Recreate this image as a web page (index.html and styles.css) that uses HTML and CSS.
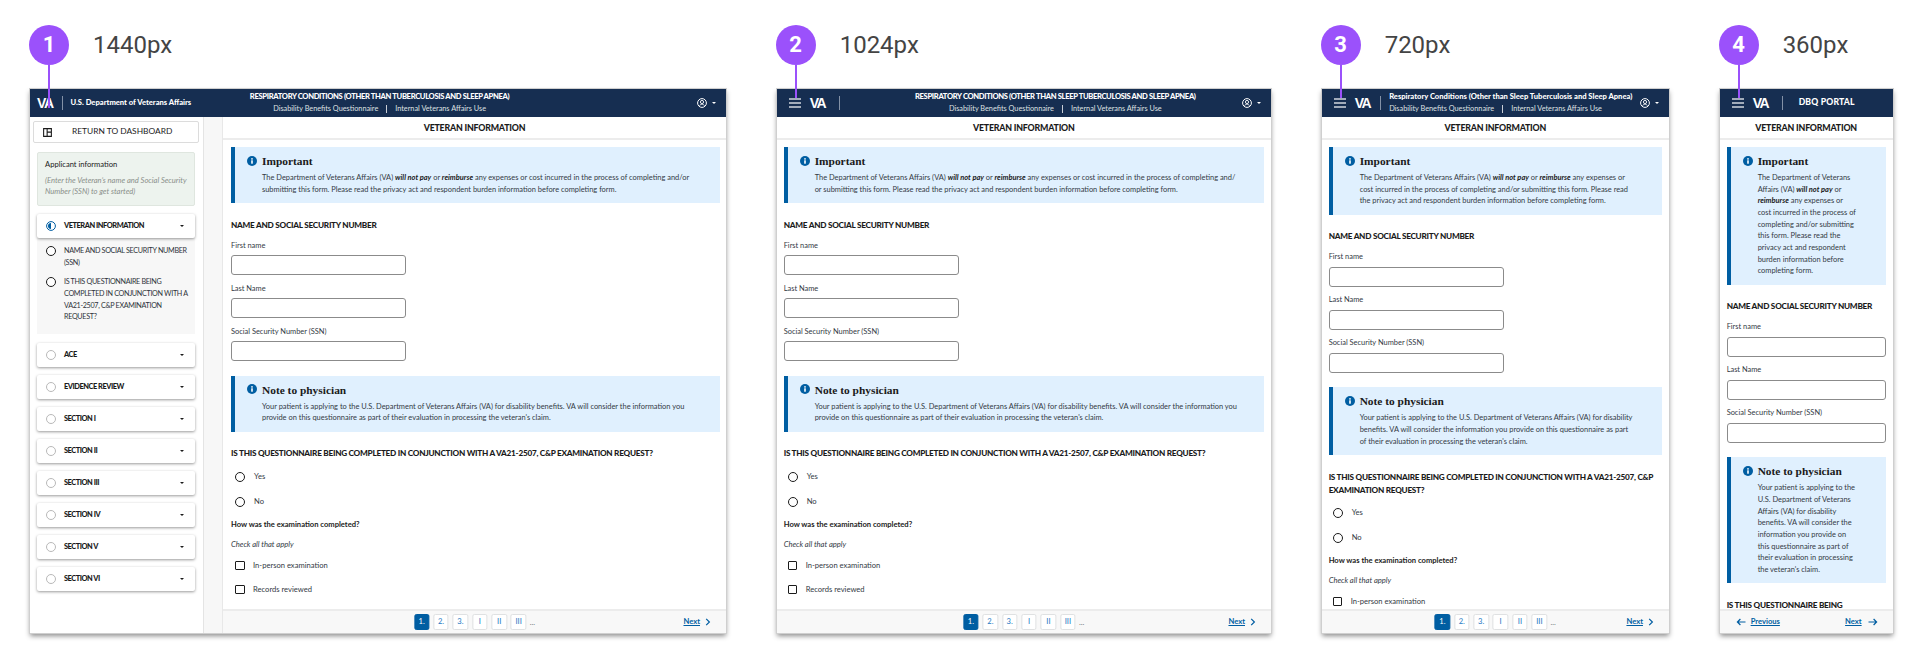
FILE: index.html
```html
<!DOCTYPE html>
<html lang="en">
<head>
    <meta charset="UTF-8">
    <title>DBQ portal breakpoints</title>
    <link rel="stylesheet" href="styles.css">
</head>
<body>
<svg class="sprite" xmlns="http://www.w3.org/2000/svg">
    <symbol id="i-info" viewBox="0 0 10 10"><circle cx="5" cy="5" r="5" fill="#005ea2"/><rect x="4.2" y="4.3" width="1.6" height="3.4" fill="#fff"/><rect x="4.2" y="2.2" width="1.6" height="1.4" fill="#fff"/></symbol>
    <symbol id="i-menu" viewBox="0 0 12 10"><rect y="0.4" width="12" height="1.2" fill="#fff"/><rect y="4.4" width="12" height="1.2" fill="#fff"/><rect y="8.4" width="12" height="1.2" fill="#fff"/></symbol>
    <symbol id="i-user" viewBox="0 0 10 10"><circle cx="5" cy="5" r="4.4" fill="none" stroke="#fff" stroke-width="1"/><circle cx="5" cy="4" r="1.6" fill="none" stroke="#fff" stroke-width=".9"/><path d="M2.6 7.6c.6-1 1.4-1.3 2.4-1.3s1.8.3 2.4 1.3" fill="none" stroke="#fff" stroke-width=".9"/></symbol>
    <symbol id="i-layout" viewBox="0 0 10 10"><path d="M.7.7h8.6v8.6H.7zM4.6.7v8.6M4.6 4.6h4.7" fill="none" stroke="#1b1b1b" stroke-width="1.2"/></symbol>
    <symbol id="i-half" viewBox="0 0 10 10"><circle cx="5" cy="5" r="4.4" fill="none" stroke="#005ea2" stroke-width="1"/><path d="M5 2a3 3 0 0 0 0 6z" fill="#005ea2"/></symbol>
    <symbol id="i-next" viewBox="0 0 6 8"><path d="M1.2.8 4.4 4 1.2 7.2" fill="none" stroke="#005ea2" stroke-width="1.2"/></symbol>
    <symbol id="i-arrow" viewBox="0 0 10 8"><path d="M.5 4h8M5.6 1l3 3-3 3" fill="none" stroke="#005ea2" stroke-width="1.2"/></symbol>
</svg>

<div class="board">

    <!-- 1440 -->
    <section class="shot w1440">
        <div class="shot-head"><span class="badge badge-long">1</span><span class="size">1440px</span></div>
        <div class="frame">
            <header class="topbar">
                <span class="va first">VA</span><span class="sep"></span>
                <span class="org">U.S. Department of Veterans Affairs</span>
                <div class="title t1440">
                    <div class="title-main">RESPIRATORY CONDITIONS (OTHER THAN TUBERCULOSIS AND SLEEP APNEA)</div>
                    <div class="title-sub"><span>Disability Benefits Questionnaire</span><i></i><span>Internal Veterans Affairs Use</span></div>
                </div>
                <svg class="user"><use href="#i-user"/></svg><span class="caret light"></span>
            </header>
            <div class="frame-body">
                <aside class="side">
                    <a class="back"><svg class="back-icon"><use href="#i-layout"/></svg>RETURN TO DASHBOARD</a>
                    <div class="applicant">
                        <p class="applicant-title">Applicant information</p>
                        <p class="applicant-hint">(Enter the Veteran’s name and Social Security<br>Number (SSN) to get started)</p>
                    </div>
                    <div class="card open"><svg class="half"><use href="#i-half"/></svg><span>VETERAN INFORMATION</span><span class="caret"></span></div>
                    <ul class="sub">
                        <li><span class="radio"></span><span>NAME AND SOCIAL SECURITY NUMBER<br>(SSN)</span></li>
                        <li><span class="radio"></span><span>IS THIS QUESTIONNAIRE BEING<br>COMPLETED IN CONJUNCTION WITH A<br>VA21-2507, C&amp;P EXAMINATION<br>REQUEST?</span></li>
                    </ul>
                    <div class="card"><span class="dot"></span><span>ACE</span><span class="caret"></span></div>
                    <div class="card"><span class="dot"></span><span>EVIDENCE REVIEW</span><span class="caret"></span></div>
                    <div class="card"><span class="dot"></span><span>SECTION I</span><span class="caret"></span></div>
                    <div class="card"><span class="dot"></span><span>SECTION II</span><span class="caret"></span></div>
                    <div class="card"><span class="dot"></span><span>SECTION III</span><span class="caret"></span></div>
                    <div class="card"><span class="dot"></span><span>SECTION IV</span><span class="caret"></span></div>
                    <div class="card"><span class="dot"></span><span>SECTION V</span><span class="caret"></span></div>
                    <div class="card"><span class="dot"></span><span>SECTION VI</span><span class="caret"></span></div>
                </aside>
                <div class="gutter"></div>
                <main class="main">
                    <div class="main-title">VETERAN INFORMATION</div>
                    <div class="scroll">
                        <div class="alert"><svg class="info"><use href="#i-info"/></svg><div>
                            <h3>Important</h3>
                            <p>The Department of Veterans Affairs (VA) <b><i>will not pay</i></b> or <b><i>reimburse</i></b> any expenses or cost incurred in the process of completing and/or<br>submitting this form. Please read the privacy act and respondent burden information before completing form.</p>
                        </div></div>
                        <h4>NAME AND SOCIAL SECURITY NUMBER</h4>
                        <label class="lbl">First name</label><div class="input"></div>
                        <label class="lbl">Last Name</label><div class="input"></div>
                        <label class="lbl">Social Security Number (SSN)</label><div class="input"></div>
                        <div class="alert note"><svg class="info"><use href="#i-info"/></svg><div>
                            <h3>Note to physician</h3>
                            <p>Your patient is applying to the U.S. Department of Veterans Affairs (VA) for disability benefits. VA will consider the information you<br>provide on this questionnaire as part of their evaluation in processing the veteran's claim.</p>
                        </div></div>
                        <h4>IS THIS QUESTIONNAIRE BEING COMPLETED IN CONJUNCTION WITH A VA21-2507, C&amp;P EXAMINATION REQUEST?</h4>
                        <div class="opts">
                            <div class="opt"><span class="radio"></span>Yes</div>
                            <div class="opt"><span class="radio"></span>No</div>
                        </div>
                        <p class="ask">How was the examination completed?</p>
                        <p class="hint">Check all that apply</p>
                        <div class="chk"><span class="box"></span>In-person examination</div>
                        <div class="chk"><span class="box"></span>Records reviewed</div>
                    </div>
                    <footer class="pager">
                        <div class="pages"><a class="on">1.</a><a>2.</a><a>3.</a><a>I</a><a>II</a><a>III</a><span>...</span></div>
                        <a class="next">Next</a><svg class="chev"><use href="#i-next"/></svg>
                    </footer>
                </main>
            </div>
        </div>
    </section>

    <!-- 1024 -->
    <section class="shot w1024">
        <div class="shot-head"><span class="badge">2</span><span class="size">1024px</span></div>
        <div class="frame">
            <header class="topbar">
                <svg class="menu"><use href="#i-menu"/></svg><span class="va">VA</span><span class="sep"></span>
                <div class="title t1024">
                    <div class="title-main">RESPIRATORY CONDITIONS (OTHER THAN SLEEP TUBERCULOSIS AND SLEEP APNEA)</div>
                    <div class="title-sub"><span>Disability Benefits Questionnaire</span><i></i><span>Internal Veterans Affairs Use</span></div>
                </div>
                <svg class="user"><use href="#i-user"/></svg><span class="caret light"></span>
            </header>
            <div class="frame-body">
                <main class="main">
                    <div class="main-title">VETERAN INFORMATION</div>
                    <div class="scroll">
                        <div class="alert"><svg class="info"><use href="#i-info"/></svg><div>
                            <h3>Important</h3>
                            <p>The Department of Veterans Affairs (VA) <b><i>will not pay</i></b> or <b><i>reimburse</i></b> any expenses or cost incurred in the process of completing and/<br>or submitting this form. Please read the privacy act and respondent burden information before completing form.</p>
                        </div></div>
                        <h4>NAME AND SOCIAL SECURITY NUMBER</h4>
                        <label class="lbl">First name</label><div class="input"></div>
                        <label class="lbl">Last Name</label><div class="input"></div>
                        <label class="lbl">Social Security Number (SSN)</label><div class="input"></div>
                        <div class="alert note"><svg class="info"><use href="#i-info"/></svg><div>
                            <h3>Note to physician</h3>
                            <p>Your patient is applying to the U.S. Department of Veterans Affairs (VA) for disability benefits. VA will consider the information you<br>provide on this questionnaire as part of their evaluation in processing the veteran's claim.</p>
                        </div></div>
                        <h4>IS THIS QUESTIONNAIRE BEING COMPLETED IN CONJUNCTION WITH A VA21-2507, C&amp;P EXAMINATION REQUEST?</h4>
                        <div class="opts">
                            <div class="opt"><span class="radio"></span>Yes</div>
                            <div class="opt"><span class="radio"></span>No</div>
                        </div>
                        <p class="ask">How was the examination completed?</p>
                        <p class="hint">Check all that apply</p>
                        <div class="chk"><span class="box"></span>In-person examination</div>
                        <div class="chk"><span class="box"></span>Records reviewed</div>
                    </div>
                    <footer class="pager">
                        <div class="pages"><a class="on">1.</a><a>2.</a><a>3.</a><a>I</a><a>II</a><a>III</a><span>...</span></div>
                        <a class="next">Next</a><svg class="chev"><use href="#i-next"/></svg>
                    </footer>
                </main>
            </div>
        </div>
    </section>

    <!-- 720 -->
    <section class="shot w720">
        <div class="shot-head"><span class="badge">3</span><span class="size">720px</span></div>
        <div class="frame">
            <header class="topbar">
                <svg class="menu"><use href="#i-menu"/></svg><span class="va">VA</span><span class="sep"></span>
                <div class="title t720">
                    <div class="title-main">Respiratory Conditions (Other than Sleep Tuberculosis and Sleep Apnea)</div>
                    <div class="title-sub"><span>Disability Benefits Questionnaire</span><i></i><span>Internal Veterans Affairs Use</span></div>
                </div>
                <svg class="user"><use href="#i-user"/></svg><span class="caret light"></span>
            </header>
            <div class="frame-body">
                <main class="main">
                    <div class="main-title">VETERAN INFORMATION</div>
                    <div class="scroll">
                        <div class="alert"><svg class="info"><use href="#i-info"/></svg><div>
                            <h3>Important</h3>
                            <p>The Department of Veterans Affairs (VA) <b><i>will not pay</i></b> or <b><i>reimburse</i></b> any expenses or<br>cost incurred in the process of completing and/or submitting this form. Please read<br>the privacy act and respondent burden information before completing form.</p>
                        </div></div>
                        <h4>NAME AND SOCIAL SECURITY NUMBER</h4>
                        <label class="lbl">First name</label><div class="input"></div>
                        <label class="lbl">Last Name</label><div class="input"></div>
                        <label class="lbl">Social Security Number (SSN)</label><div class="input"></div>
                        <div class="alert note"><svg class="info"><use href="#i-info"/></svg><div>
                            <h3>Note to physician</h3>
                            <p>Your patient is applying to the U.S. Department of Veterans Affairs (VA) for disability<br>benefits. VA will consider the information you provide on this questionnaire as part<br>of their evaluation in processing the veteran's claim.</p>
                        </div></div>
                        <h4>IS THIS QUESTIONNAIRE BEING COMPLETED IN CONJUNCTION WITH A VA21-2507, C&amp;P<br>EXAMINATION REQUEST?</h4>
                        <div class="opts">
                            <div class="opt"><span class="radio"></span>Yes</div>
                            <div class="opt"><span class="radio"></span>No</div>
                        </div>
                        <p class="ask">How was the examination completed?</p>
                        <p class="hint">Check all that apply</p>
                        <div class="chk"><span class="box"></span>In-person examination</div>
                    </div>
                    <footer class="pager">
                        <div class="pages"><a class="on">1.</a><a>2.</a><a>3.</a><a>I</a><a>II</a><a>III</a><span>...</span></div>
                        <a class="next">Next</a><svg class="chev"><use href="#i-next"/></svg>
                    </footer>
                </main>
            </div>
        </div>
    </section>

    <!-- 360 -->
    <section class="shot w360">
        <div class="shot-head"><span class="badge">4</span><span class="size">360px</span></div>
        <div class="frame">
            <header class="topbar">
                <svg class="menu"><use href="#i-menu"/></svg><span class="va">VA</span><span class="sep"></span>
                <span class="portal">DBQ PORTAL</span>
            </header>
            <div class="frame-body">
                <main class="main">
                    <div class="main-title">VETERAN INFORMATION</div>
                    <div class="scroll">
                        <div class="alert"><svg class="info"><use href="#i-info"/></svg><div>
                            <h3>Important</h3>
                            <p>The Department of Veterans<br>Affairs (VA) <b><i>will not pay</i></b> or<br><b><i>reimburse</i></b> any expenses or<br>cost incurred in the process of<br>completing and/or submitting<br>this form. Please read the<br>privacy act and respondent<br>burden information before<br>completing form.</p>
                        </div></div>
                        <h4>NAME AND SOCIAL SECURITY NUMBER</h4>
                        <label class="lbl">First name</label><div class="input"></div>
                        <label class="lbl">Last Name</label><div class="input"></div>
                        <label class="lbl">Social Security Number (SSN)</label><div class="input"></div>
                        <div class="alert note"><svg class="info"><use href="#i-info"/></svg><div>
                            <h3>Note to physician</h3>
                            <p>Your patient is applying to the<br>U.S. Department of Veterans<br>Affairs (VA) for disability<br>benefits. VA will consider the<br>information you provide on<br>this questionnaire as part of<br>their evaluation in processing<br>the veteran's claim.</p>
                        </div></div>
                        <h4>IS THIS QUESTIONNAIRE BEING</h4>
                    </div>
                    <footer class="pager pager-small">
                        <svg class="arrow flip"><use href="#i-arrow"/></svg><a class="next">Previous</a>
                        <a class="next push">Next</a><svg class="arrow"><use href="#i-arrow"/></svg>
                    </footer>
                </main>
            </div>
        </div>
    </section>

</div>
</body>
</html>
```

FILE: styles.css
```css
*{
    padding:0;
    margin:0;
    box-sizing:border-box;
}
body{
    background:#fff;
    color:#1b1b1b;
    font-family:"Lato","Noto Sans",sans-serif;
    font-size:7.6px;
    line-height:11.67px;
}
a{
    text-decoration:none;
}
ul{
    list-style:none;
}
.sprite{
    display:none;
}
.board{
    display:flex;
    gap:50.67px;
    height:659px;
    padding:25px 0 0 30px;
    overflow:hidden;
}
.w1440{width:696px;}
.w1024{width:494.33px;}
.w720{width:347.33px;}
.w360{width:173px;}

/* number + label above each frame */
.shot-head{
    display:flex;
    align-items:center;
    gap:24px;
    height:40px;
    margin:0 0 24px -1px;
}
.badge{
    position:relative;
    width:40px;
    height:40px;
    border-radius:50%;
    background:#9b51fb;
    color:#fff;
    font:700 22px/40px Roboto,sans-serif;
    text-align:center;
    z-index:2;
}
.badge::after{
    content:"";
    position:absolute;
    left:19px;
    top:40px;
    width:2px;
    height:33px;
    background:#9b51fb;
}
.badge-long::after{
    height:43px;
}
.size{
    font:400 24px/40px Roboto,sans-serif;
    color:#444;
}

/* frame */
.frame{
    display:flex;
    flex-direction:column;
    height:544px;
    overflow:hidden;
    background:#fff;
    box-shadow:0 0 0 1px #cfcfcf,0 3px 5px 0 rgba(0,0,0,.45);
}
.topbar{
    flex:none;
    display:flex;
    align-items:center;
    height:28px;
    padding-left:12px;
    background:#162e51;
    color:#fff;
}
.menu{
    width:12px;
    height:10px;
    margin-right:9px;
}
.va{
    width:16px;
    font:700 14px/14px "Liberation Sans",sans-serif;
    letter-spacing:-1.4px;
}
.va.first{
    margin-left:-5px;
}
.sep{
    width:1px;
    height:14px;
    margin:0 8px 0 13px;
    background:#8391a6;
}
.va.first + .sep{
    margin-left:8.5px;
}
.w720 .sep{
    margin-left:9.5px;
}
.org{
    font-weight:900;
    font-size:7.6px;
    white-space:nowrap;
}
.portal{
    margin-left:8px;
    font-weight:900;
    font-size:8.6px;
    letter-spacing:.2px;
}
.title{
    flex:1;
    text-align:center;
    white-space:nowrap;
}
.t1440{margin-right:129px;}
.t1024{margin-left:21px;}
.t720{text-align:left;}
.title-main{
    font-weight:900;
    font-size:7.6px;
    letter-spacing:-.34px;
}
.t720 .title-main{
    letter-spacing:0;
}
.title-sub{
    display:flex;
    justify-content:center;
    gap:8px;
    font-size:7.3px;
    color:#dfe1e2;
}
.t720 .title-sub{
    justify-content:flex-start;
}
.title-sub i{
    width:1px;
    height:8px;
    margin-top:2px;
    background:#c9ced6;
}
.user{
    flex:none;
    width:10px;
    height:10px;
    margin-left:auto;
}
.caret{
    flex:none;
    width:0;
    height:0;
    margin-left:5px;
    border:2.3px solid transparent;
    border-top:2.8px solid #1b1b1b;
    border-bottom:0;
}
.caret.light{
    border-top-color:#fff;
    margin-right:10px;
}
.frame-body{
    flex:1;
    display:flex;
    min-height:0;
}

/* sidebar, only on the widest */
.side{
    flex:none;
    width:174px;
    padding:4px 8px 0 7px;
    border-right:1px solid #e4e4e4;
}
.gutter{
    flex:none;
    width:19px;
    border-right:1px solid #e8e8e8;
    background:#f7f7f7;
}
.back{
    display:flex;
    align-items:center;
    gap:20px;
    height:22px;
    margin:0 -4px 0 -4px;
    padding-left:9px;
    border:1px solid #dcdcdc;
    border-radius:2px;
    font-size:8.4px;
    color:#1b1b1b;
}
.back-icon{
    width:9px;
    height:9px;
}
.applicant{
    height:54px;
    margin-top:8.5px;
    padding:6.5px 7px 0;
    border:1px solid #dfe6df;
    border-radius:2px;
    background:#edf3ee;
}
.applicant-hint{
    margin-top:4px;
    font-style:italic;
    color:#8a8f8a;
    white-space:nowrap;
}
.card{
    display:flex;
    align-items:center;
    gap:8.5px;
    height:24px;
    margin-bottom:8px;
    padding:0 11px 0 8.5px;
    border-radius:2px;
    background:#fff;
    box-shadow:0 1px 3px rgba(0,0,0,.4);
    font-weight:900;
    font-size:7.4px;
    letter-spacing:-.45px;
}
.card .caret{
    margin-left:auto;
}
.card.open{
    margin:8px 0 0;
    position:relative;
}
.half,.dot{
    flex:none;
    width:10px;
    height:10px;
}
.dot{
    border:1px solid #b9b9b9;
    border-radius:50%;
}
.sub{
    margin-bottom:9px;
    padding:7.7px 4px 10.5px 8.5px;
    background:#f7f7f7;
    font-size:7.2px;
    letter-spacing:-.32px;
    color:#2d333a;
}
.sub li{
    display:flex;
    gap:8.5px;
    margin-bottom:7.8px;
    white-space:nowrap;
}
.sub li:last-child{
    margin-bottom:0;
}
.sub .radio{
    margin-top:1px;
}
.radio{
    flex:none;
    width:10px;
    height:10px;
    border:1.1px solid #1b1b1b;
    border-radius:50%;
    background:#fff;
}

/* form column */
.main{
    flex:1;
    display:flex;
    flex-direction:column;
    min-width:0;
}
.main-title{
    flex:none;
    height:23px;
    border-bottom:2px solid #ececec;
    font-weight:900;
    font-size:8.8px;
    line-height:21px;
    letter-spacing:-.2px;
    text-align:center;
}
.scroll{
    flex:1;
    min-height:0;
    overflow:hidden;
    padding:7px 7px 0;
}
.w1440 .scroll{
    padding:7px 6px 0 8px;
}
.alert{
    display:flex;
    gap:5px;
    padding:8px 12px 7.7px;
    border-left:4px solid #005ea2;
    background:#e0f0fe;
    white-space:nowrap;
}
.alert h3{
    height:12.5px;
    margin-bottom:4.5px;
    font:700 11.4px/12.5px "Liberation Serif",serif;
}
.alert p{
    font-size:7.45px;
    color:#333a44;
}
.alert p b{
    color:#1b1b1b;
}
.info{
    flex:none;
    width:10px;
    height:10px;
    margin-top:.5px;
}
.note{
    margin-top:15.6px;
}
h4{
    margin-top:15.5px;
    font-weight:900;
    font-size:8.2px;
    line-height:13px;
    letter-spacing:-.25px;
    white-space:nowrap;
}
.lbl{
    display:block;
    height:12px;
    margin:8.5px 0 3.5px;
    line-height:12px;
    font-size:7.45px;
    color:#333a44;
}
h4 + .lbl{
    margin-top:8px;
}
.input{
    width:175px;
    height:20px;
    margin-bottom:-1px;
    border:1px solid #8b8b8b;
    border-radius:3px;
    background:#fff;
}
.w360 .input{
    width:100%;
}
.opts{
    margin-top:4.3px;
}
.opt{
    display:flex;
    align-items:center;
    gap:9px;
    height:25px;
    padding-left:4px;
    color:#333a44;
}
.ask{
    margin-top:3.5px;
    font-weight:700;
    line-height:12px;
}
.hint{
    margin-top:7.7px;
    font-style:italic;
    line-height:12px;
    color:#333a44;
}
.chk{
    display:flex;
    align-items:center;
    gap:8.5px;
    height:24.4px;
    padding-left:4px;
    color:#333a44;
}
.hint + .chk{
    margin-top:3.5px;
}
.box{
    width:9.5px;
    height:9.5px;
    border:1.1px solid #1b1b1b;
    border-radius:1px;
    background:#fff;
}

/* footer */
.pager{
    flex:none;
    position:relative;
    display:flex;
    align-items:center;
    justify-content:flex-end;
    height:24px;
    padding-right:15px;
    border-top:2px solid #ececec;
    background:#f8f8f8;
}
.pages{
    position:absolute;
    left:50%;
    top:3px;
    transform:translateX(-50%);
    display:flex;
    gap:3.9px;
    color:#71767a;
}
.pages a{
    width:15.5px;
    height:15.5px;
    border:1px solid #dfe1e2;
    border-radius:2px;
    background:#fff;
    color:#2378c3;
    line-height:13.5px;
    text-align:center;
}
.pages a.on{
    border-color:#005ea2;
    background:#005ea2;
    color:#fff;
}
.pages span{
    margin-left:-.5px;
    line-height:17px;
}
.next{
    color:#005ea2;
    text-decoration:underline;
    font-weight:700;
}
.chev{
    width:6px;
    height:8px;
    margin-left:5px;
}
.pager-small{
    justify-content:flex-start;
    padding:0 15px 0 16px;
}
.arrow{
    width:10px;
    height:8px;
}
.arrow.flip{
    transform:scaleX(-1);
    margin-right:5px;
}
.pager-small .next + .arrow{
    margin-left:6px;
}
.push{
    margin-left:auto;
}
```
